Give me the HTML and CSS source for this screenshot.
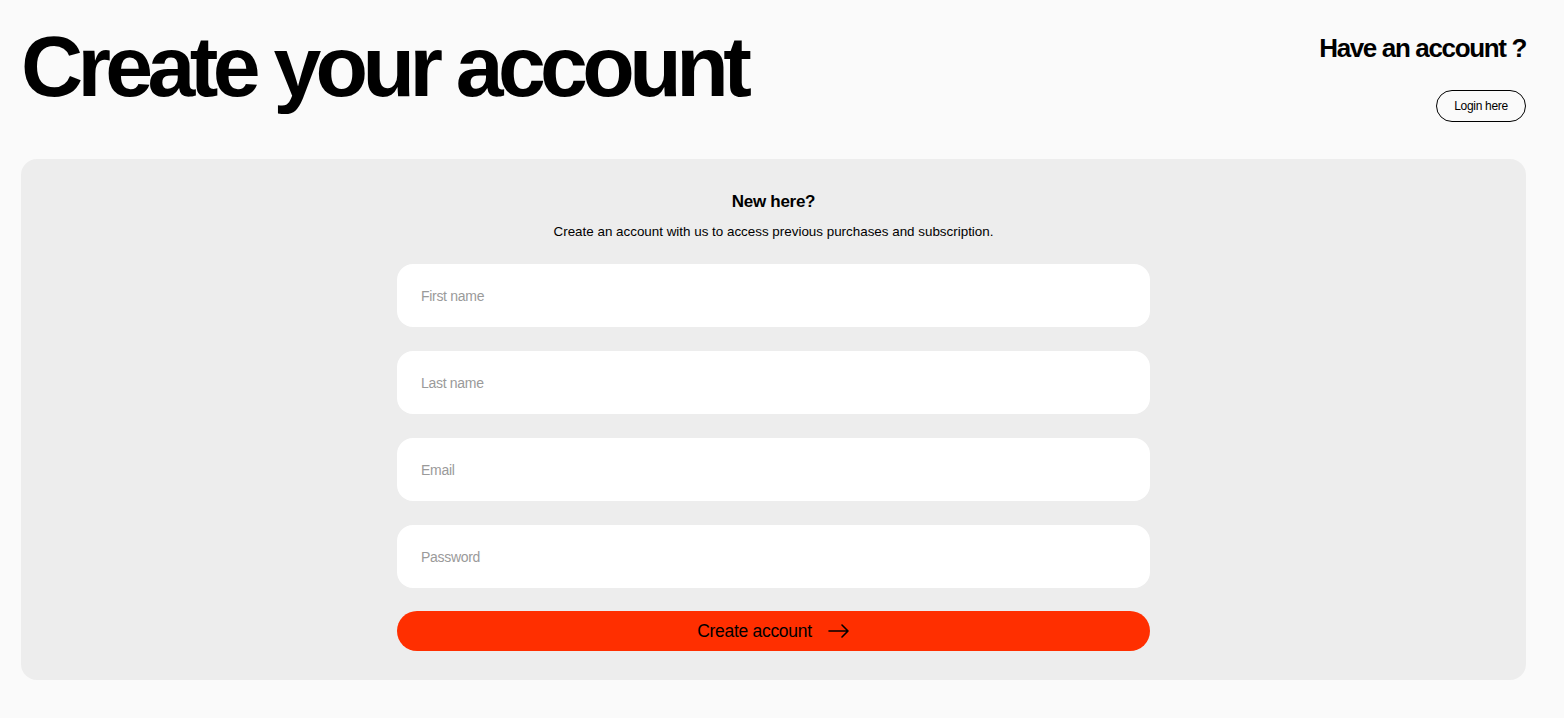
FILE: index.html
```html
<!DOCTYPE html>
<html lang="en">
<head>
<meta charset="utf-8">
<title>Create your account</title>
<link rel="stylesheet" href="styles.css">
</head>
<body>
<div class="page">
  <header class="top">
    <h1 class="title">Create your account</h1>
    <div class="have">
      <h2 class="have-title">Have an account ?</h2>
      <a class="login-btn" href="#">Login here</a>
    </div>
  </header>
  <section class="card">
    <h3 class="card-title">New here?</h3>
    <p class="card-sub">Create an account with us to access previous purchases and subscription.</p>
    <form class="form">
      <input class="field" type="text" placeholder="First name">
      <input class="field" type="text" placeholder="Last name">
      <input class="field" type="email" placeholder="Email">
      <input class="field" type="password" placeholder="Password">
      <button class="submit" type="button">
        <span>Create account</span>
        <svg class="arrow" width="22" height="14" viewBox="0 0 22 14" fill="none" stroke="#000" stroke-width="1.6" stroke-linecap="round" stroke-linejoin="round"><path d="M1 7h19M14 1l6 6-6 6"/></svg>
      </button>
    </form>
  </section>
</div>
</body>
</html>
```

FILE: styles.css
```css
* { box-sizing: border-box; }
html, body { margin: 0; padding: 0; }
body {
  background: #fafafa;
  font-family: "Liberation Sans", Arial, sans-serif;
  color: #000;
}
.page {
  padding: 20px 38px 38px 21px;
}
.top {
  display: flex;
  justify-content: space-between;
  align-items: flex-start;
  height: 139px;
}
.title {
  margin: 0;
  font-size: 86px;
  font-weight: 700;
  letter-spacing: -5.6px;
  line-height: 1;
  padding-top: 3px;
}
.have {
  display: flex;
  flex-direction: column;
  align-items: flex-end;
  padding-top: 13px;
}
.have-title {
  margin: 0;
  font-size: 26px;
  font-weight: 700;
  letter-spacing: -1.35px;
  line-height: 30px;
}
.login-btn {
  margin-top: 27px;
  width: 90px;
  height: 32px;
  border: 1px solid #000;
  border-radius: 16px;
  display: flex;
  align-items: center;
  justify-content: center;
  font-size: 12px;
  letter-spacing: -0.3px;
  color: #000;
  text-decoration: none;
}
.card {
  background: #ededed;
  border-radius: 16px;
  padding: 32px 0 29px;
  display: flex;
  flex-direction: column;
  align-items: center;
}
.card-title {
  margin: 0;
  font-size: 17px;
  font-weight: 700;
  letter-spacing: -0.3px;
  line-height: 22px;
}
.card-sub {
  margin: 10px 0 0;
  font-size: 13.4px;
  letter-spacing: 0;
  line-height: 18px;
}
.form {
  margin-top: 23px;
  width: 753px;
  display: flex;
  flex-direction: column;
  gap: 24px;
}
.field {
  height: 63px;
  border: none;
  border-radius: 16px;
  background: #fff;
  padding: 0 24px;
  font-family: "Liberation Sans", Arial, sans-serif;
  font-size: 14px;
  letter-spacing: -0.3px;
  color: #000;
  outline: none;
}
.field::placeholder { color: #9a9a9a; }
.submit {
  margin-top: -1px;
  height: 40px;
  border: none;
  border-radius: 20px;
  background: #ff2f00;
  display: flex;
  align-items: center;
  justify-content: center;
  gap: 16px;
  font-family: "Liberation Sans", Arial, sans-serif;
  font-size: 17.5px;
  letter-spacing: -0.3px;
  color: #000;
  cursor: pointer;
  padding: 0;
}
.arrow { display: block; }
```
